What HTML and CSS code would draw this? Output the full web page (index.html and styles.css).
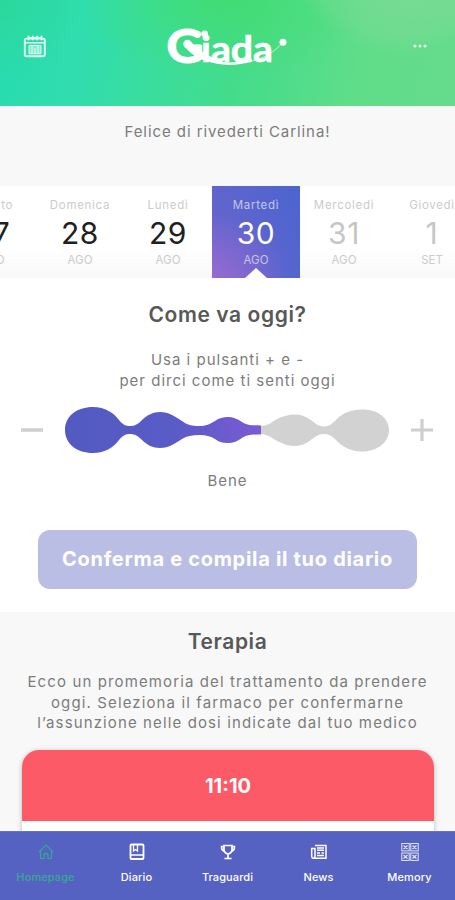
FILE: index.html
```html
<!DOCTYPE html>
<html lang="it">
<head>
<meta charset="utf-8">
<meta name="viewport" content="width=device-width, initial-scale=1">
<title>Giada</title>
<link rel="stylesheet" href="styles.css">
</head>
<body>
<div class="app">
  <header class="header">
    <svg class="calendar" width="24" height="24" viewBox="0 0 24 24" fill="none" stroke="currentColor">
      <rect x="1.8" y="4.6" width="20" height="17.6" rx="1.5" stroke-width="1.9"/>
      <path d="M2 8.8h20" stroke-width="1.5"/>
      <path d="M5 3.8h14" stroke-width="1.6"/>
      <path d="M5.500 2.500v3M9.800 2.500v3M14.200 2.500v3M18.500 2.500v3" stroke-width="2" stroke-linecap="round"/>
      <path d="M6 11.4h12v8.4H6z" fill="currentColor" fill-opacity=".5" stroke-width="1"/>
      <path d="M9 11v9M12 14v6M15 11v9" stroke-width="1.1"/>
    </svg>
    <svg class="logo" width="124" height="44" viewBox="0 0 124 44">
      <text class="logo-cap" x="1" y="36.500" textLength="36" lengthAdjust="spacingAndGlyphs">G</text>
      <text class="logo-rest" x="35" y="36.500" textLength="72" lengthAdjust="spacingAndGlyphs">iada</text>
      <circle cx="21.500" cy="19" r="4.200" fill="#fff"/>
      <path d="M72 38C94 37 109 27 116 18" fill="none" stroke="#fff" stroke-width=".8" opacity=".8"/>
      <path d="M19 22C28 33 43 40 63 38C49 36 35 27 25 17z" fill="#fff"/>
      <path d="M39 34Q61 43 86 35" fill="none" stroke="#fff" stroke-width="2.400"/>
      <circle cx="38.700" cy="8.800" r="3.300" fill="#fff"/>
      <circle cx="117" cy="17.300" r="3.500" fill="#fff"/>
    </svg>
    <svg class="more" width="16" height="6" viewBox="0 0 16 6" fill="currentColor"><circle cx="3" cy="3" r="1.500"/><circle cx="8" cy="3" r="1.500"/><circle cx="13" cy="3" r="1.500"/></svg>
  </header>
  <p class="greeting">Felice di rivederti Carlina!</p>
  <div class="days">
    <div class="day"><span>Sabato</span><b>27</b><small>AGO</small></div>
    <div class="day"><span>Domenica</span><b>28</b><small>AGO</small></div>
    <div class="day"><span>Lunedì</span><b>29</b><small>AGO</small></div>
    <div class="day active"><span>Martedì</span><b>30</b><small>AGO</small></div>
    <div class="day future"><span>Mercoledì</span><b>31</b><small>AGO</small></div>
    <div class="day future"><span>Giovedì</span><b>1</b><small>SET</small></div>
  </div>
  <section class="mood">
    <h2>Come va oggi?</h2>
    <p class="hint">Usa i pulsanti + e -<br>per dirci come ti senti oggi</p>
    <div class="slider">
      <svg width="22" height="22" viewBox="0 0 22 22"><path d="M0 11h22" stroke="#cecece" stroke-width="3.500"/></svg>
      <svg width="324" height="48" viewBox="0 0 324 48">
        <defs>
          <linearGradient id="fill" x1="0" x2="196" y1="0" y2="0" gradientUnits="userSpaceOnUse"><stop offset="0" stop-color="#525bc2"/><stop offset=".55" stop-color="#5a5bc6"/><stop offset="1" stop-color="#7a5bd4"/></linearGradient>
        </defs>
        <path fill="url(#fill)" d="M0 24C0 10 12 1 28 1C40 1 49 7 54 14C58 19 61 20 65 20C70 20 73 18 77 14C82 9 88 6 95 6C104 6 111 11 117 15C122 19 127 20 134 20C141 20 145 18 150 15C154 12 158 11 163 11C168 11 173 13 177 16C181 19 186 19.500 196 19.500V28.500C186 28.500 181 29 177 32C173 35 168 37 163 37C158 37 154 36 150 33C145 30 141 29 134 29C127 29 122 30 117 33C111 37 104 42 95 42C88 42 82 39 77 34C73 30 70 28 65 28C61 28 58 29 54 34C49 41 40 47 28 47C12 47 0 38 0 24Z"/>
        <path fill="#d2d2d2" d="M196 20C203 20 207 16 212 13C218 10 224 8.500 230 8.500C237 8.500 242 11 247 15C251 18 254 20.500 259 20.500C264 20.500 267 18 272 13C278 7 286 3.500 297 3.500C313 3.500 324 12 324 24C324 36 313 45.500 297 45.500C286 45.500 278 41 272 35C267 30 264 28 259 28C254 28 251 30 247 33C242 37 237 40 230 40C224 40 218 38 212 35C207 32 203 28.500 196 28Z"/>
      </svg>
      <svg width="22" height="22" viewBox="0 0 22 22"><path d="M0 11h22M11 0v22" stroke="#cecece" stroke-width="3.200"/></svg>
    </div>
    <p class="value">Bene</p>
    <button class="confirm">Conferma e compila il tuo diario</button>
  </section>
  <section class="therapy">
    <h2>Terapia</h2>
    <p>Ecco un promemoria del trattamento da prendere<br>oggi. Seleziona il farmaco per confermarne<br>l’assunzione nelle dosi indicate dal tuo medico</p>
    <div class="card"><div class="time">11:10</div></div>
  </section>
  <nav class="nav">
    <a class="home"><svg width="18" height="20" viewBox="0 0 18 20" fill="none" stroke="currentColor" stroke-width="1.200"><path d="M2 10L9 3L16 10M3.500 8.500V16.500H7V12.500Q9 10.500 11 12.500V16.500H14.500V8.500"/></svg><span>Homepage</span></a>
    <a class="diario"><svg width="18" height="20" viewBox="0 0 18 20" fill="none" stroke="currentColor"><rect x="2.500" y="2.500" width="13" height="14.500" rx="1" stroke-width="1.800"/><path d="M3 13h12" stroke-width="1.500"/><path d="M5.500 3v6L7.500 7.500L9.500 9V3" stroke-width="1.300"/></svg><span>Diario</span></a>
    <a class="traguardi"><svg width="18" height="20" viewBox="0 0 18 20" fill="none" stroke="currentColor" stroke-width="1.700"><path d="M5 3.500h8V8Q12.500 11.500 9 12Q5.500 11.500 5 8ZM5 4.500H2.500Q2.500 9 6 9.500M13 4.500h2.500Q15.500 9 12 9.500M9 12v4M5.500 16.500h7"/></svg><span>Traguardi</span></a>
    <a class="news"><svg width="18" height="20" viewBox="0 0 18 20" fill="none" stroke="currentColor" stroke-width="1.500"><path d="M5 3.500h11v12.800H3.500Q1.700 16.300 1.700 14V6.500H5V14Q5 16 3.500 16"/><path d="M7 6h7M7 8.300h7M7 11h3M11.500 11H14M7 13.500h7"/></svg><span>News</span></a>
    <a class="memory"><svg width="18" height="20" viewBox="0 0 18 20" fill="none" stroke="currentColor" stroke-width="1" opacity=".85"><rect x=".8" y="1.500" width="7.400" height="7.400"/><rect x="9.800" y="1.500" width="7.400" height="7.400"/><rect x=".8" y="11" width="7.400" height="7.400"/><rect x="9.800" y="11" width="7.400" height="7.400"/><path d="M2.500 3.500L6.500 7M6.500 3.500L2.500 7M11.500 3.500L15.500 7M15.500 3.500L11.500 7M2.500 13L6.500 16.500M6.500 13L2.500 16.500M11.500 13L15.500 16.500M15.500 13L11.500 16.500" stroke-width="1.200"/></svg><span>Memory</span></a>
  </nav>
</div>
</body>
</html>
```
FILE: styles.css
```css
* { box-sizing: border-box; }
body, h2, p { margin: 0; }
body { font-family: Inter, Roboto, "Liberation Sans", sans-serif; color: #7c7c7c; background: #f8f8f8; }
.app { width: 455px; height: 900px; overflow: hidden; display: flex; flex-direction: column; }
svg { display: block; flex: none; }
.header {
  flex: none; height: 106px; padding: 0 27px 14px 23px; color: #fff;
  display: flex; align-items: center; justify-content: space-between;
  background:
    radial-gradient(circle at 400px -60px, rgba(150,218,165,.55) 0, rgba(140,218,155,.3) 94px, transparent 115px),
    radial-gradient(ellipse 150px 80px at 225px 0, rgba(66,220,105,.7), transparent),
    radial-gradient(ellipse 90px 80px at 0 0, rgba(45,214,145,.7), transparent),
    linear-gradient(100deg, #27dbb0 0%, #30ddaf 18%, #44dc8b 53%, #5fdd89 78%, #66dc8c 100%);
}
.calendar { opacity: .85; }
.logo { margin: 1px 3px 0 0; }
.logo text { fill: #fff; stroke: #fff; stroke-linejoin: round; font-family: Lato, sans-serif; }
.logo-cap { font-size: 44px; font-weight: 400; stroke-width: 3; }
.logo-rest { font-size: 36px; font-weight: 700; stroke-width: .6; }
.more { opacity: .85; }
.greeting { flex: none; height: 80px; padding-top: 16px; text-align: center; font-size: 15px; line-height: 20px; letter-spacing: .93px; }
.days { flex: none; display: flex; height: 92px; width: 528px; margin-left: -52px; background: linear-gradient(#fff 65%, #f8f8f8); }
.day { width: 88px; display: flex; flex-direction: column; align-items: center; color: #cbcbcb; padding-top: 11px; }
.day span { font-size: 11.5px; line-height: 16px; letter-spacing: .7px; }
.day b { font-weight: 400; font-size: 30px; line-height: 40px; color: #202020; letter-spacing: .6px; }
.day small { font-size: 11.5px; line-height: 14px; }
.day.future b { color: #c6c6c6; }
.day.active { position: relative; color: #c6c5eb; background: radial-gradient(ellipse 75px 65px at 0 100%, #956bd2, transparent), linear-gradient(65deg, #6b64cc, #4b65cf); }
.day.active b { color: #fff; }
.day.active::after { content: ""; position: absolute; bottom: 0; left: 33px; border: 11px solid transparent; border-top: 0; border-bottom: 10px solid #fff; }
.mood { flex: none; height: 334px; background: #fff; text-align: center; padding-top: 23px; }
h2 { font-size: 21px; line-height: 28px; font-weight: 600; color: #585858; letter-spacing: .6px; }
.hint { margin-top: 21px; font-size: 15px; line-height: 20.500px; letter-spacing: 1px; }
.slider { display: flex; justify-content: space-between; align-items: center; padding: 0 22px 0 21px; margin-top: 15px; }
.value { margin-top: 16px; font-size: 15px; line-height: 20px; letter-spacing: .9px; padding-top: 1px; }
.confirm { display: block; width: 379px; height: 59px; margin: 39px auto 0; padding: 0 0 2px; border: 0; border-radius: 12px; background: #babee5; color: #fff; font: 700 20px Inter, sans-serif; letter-spacing: .7px; }
.therapy { flex: 1; min-height: 0; overflow: hidden; padding: 16px 21px 0; text-align: center; }
.therapy p { margin-top: 16px; font-size: 15px; line-height: 20.500px; letter-spacing: 1.12px; white-space: nowrap; }
.card { margin: 16px 0 0 1px; height: 120px; width: 412px; background: #fff; border-radius: 17px 17px 0 0; box-shadow: 0 1px 5px rgba(0,0,0,.25); }
.time { height: 71px; border-radius: 17px 17px 0 0; background: #fc5a67; color: #fff; font-weight: 700; font-size: 20px; line-height: 72px; }
.nav { flex: none; height: 69px; background: #5662c1; display: flex; color: #fff; border-top: 1px solid #6671c6; }
.nav a { width: 91px; flex: none; display: flex; flex-direction: column; align-items: center; padding-top: 10px; }
.nav span { font-size: 11px; line-height: 14px; font-weight: 500; margin-top: 8px; letter-spacing: .1px; }
.nav .home { color: #35a893; }
```
